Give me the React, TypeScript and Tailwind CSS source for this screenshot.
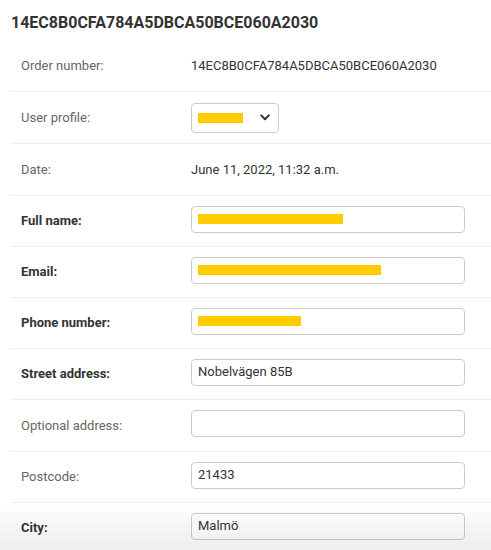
import React from "react";

type Row = {
  label: string;
  strong?: boolean;
  kind: "text" | "select" | "input";
  value?: string;
  blob?: string;
  h: string;
};

const rows: Row[] = [
  { label: "Order number:", kind: "text", value: "14EC8B0CFA784A5DBCA50BCE060A2030", h: "h-[52px]" },
  { label: "User profile:", kind: "select", h: "h-[52px]" },
  { label: "Date:", kind: "text", value: "June 11, 2022, 11:32 a.m.", h: "h-[52px]" },
  { label: "Full name:", strong: true, kind: "input", blob: "w-[145px]", h: "h-[51px]" },
  { label: "Email:", strong: true, kind: "input", blob: "w-[183px]", h: "h-[51px]" },
  { label: "Phone number:", strong: true, kind: "input", blob: "w-[103px]", h: "h-[51px]" },
  { label: "Street address:", strong: true, kind: "input", value: "Nobelvägen 85B", h: "h-[51px]" },
  { label: "Optional address:", kind: "input", value: "", h: "h-[52px]" },
  { label: "Postcode:", kind: "input", value: "21433", h: "h-[51px]" },
  { label: "City:", strong: true, kind: "input", value: "Malmö", h: "h-[51px]" },
];

const Field = ({ row }: { row: Row }) => {
  if (row.kind === "text") {
    return <span className="text-[13px] text-[#333]">{row.value}</span>;
  }
  if (row.kind === "select") {
    return (
      <div className="flex items-center justify-between w-[88px] h-[30px] rounded-[4px] border border-[#ccc] pl-[6px] pr-[8px]">
        <span className="block w-[45px] h-[10px] bg-[#ffcc00]" />
        <svg width="10" height="7" viewBox="0 0 10 7">
          <path d="M1.2 1.4 5 5.2 8.8 1.4" fill="none" stroke="#333" strokeWidth="2" strokeLinecap="round" strokeLinejoin="round" />
        </svg>
      </div>
    );
  }
  return (
    <div className="flex items-center w-[274px] h-[27px] -mt-1 rounded-[4px] border border-[#ccc] px-[6px]">
      {row.blob ? (
        <span className={`block h-[10px] bg-[#ffcc00] ${row.blob}`} />
      ) : (
        <span className="text-[13px] text-[#333]">{row.value}</span>
      )}
    </div>
  );
};

export default function App() {
  return (
    <div className="relative w-[491px] h-[550px] overflow-hidden bg-white pl-[11px]" style={{ fontFamily: "Roboto, 'Liberation Sans', sans-serif" }}>
      <div className="h-[40px] flex items-center pt-[6px]">
        <h1 className="text-[16px] font-bold text-[#333]">14EC8B0CFA784A5DBCA50BCE060A2030</h1>
      </div>
      {rows.map((row) => (
        <div key={row.label} className={`flex items-center border-b border-[#eee] pl-[10px] ${row.h}`}>
          <div className={`w-[170px] text-[13px] ${row.strong ? "font-bold text-[#333]" : "text-[#666]"}`}>{row.label}</div>
          <Field row={row} />
        </div>
      ))}
      <div className="pointer-events-none absolute left-0 right-0 bottom-0 h-[48px] bg-gradient-to-b from-transparent to-black/[0.07]" />
    </div>
  );
}
